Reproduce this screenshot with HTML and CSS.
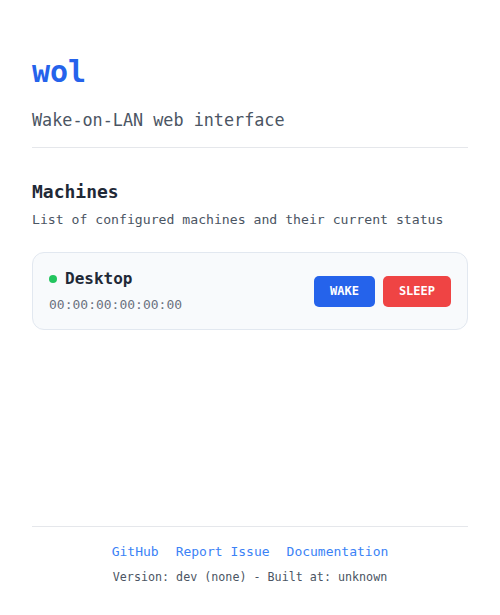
FILE: index.html
```html
<!DOCTYPE html>
<html lang="en">
<head>
<meta charset="utf-8">
<title>wol</title>
<link rel="stylesheet" href="styles.css">
</head>
<body>
<div class="page">
  <main class="main">
    <header class="header">
      <h1 class="title">wol</h1>
      <p class="subtitle">Wake-on-LAN web interface</p>
    </header>
    <section class="machines">
      <h2 class="section-title">Machines</h2>
      <p class="section-desc">List of configured machines and their current status</p>
      <div class="card">
        <div class="card-info">
          <div class="card-name"><span class="dot"></span>Desktop</div>
          <div class="card-mac">00:00:00:00:00:00</div>
        </div>
        <div class="card-actions">
          <button class="btn btn-wake">WAKE</button>
          <button class="btn btn-sleep">SLEEP</button>
        </div>
      </div>
    </section>
  </main>
  <footer class="footer">
    <nav class="links">
      <a href="#">GitHub</a>
      <a href="#">Report Issue</a>
      <a href="#">Documentation</a>
    </nav>
    <p class="version">Version: dev (none) - Built at: unknown</p>
  </footer>
</div>
</body>
</html>
```
FILE: styles.css
```css
* { box-sizing: border-box; }
html, body { margin: 0; padding: 0; }
body {
  font-family: "DejaVu Sans Mono", monospace;
  background: #ffffff;
  color: #1f2937;
}
.page {
  min-height: 100vh;
  display: flex;
  flex-direction: column;
  padding: 32px 32px 29px;
}
.main { flex: 1; }
.header {
  border-bottom: 1px solid #e5e7eb;
  padding-bottom: 15px;
  margin-bottom: 31px;
}
.title {
  margin: 0;
  padding-top: 20px;
  font-size: 30px;
  line-height: 40px;
  font-weight: bold;
  color: #2563eb;
}
.subtitle {
  margin: 16px 0 0;
  font-size: 16.8px;
  line-height: 24px;
  color: #4b5563;
}
.section-title {
  margin: 0;
  font-size: 18px;
  line-height: 26px;
  font-weight: bold;
  color: #1f2937;
}
.section-desc {
  margin: 6px 0 0;
  font-size: 13.15px;
  line-height: 18px;
  color: #4b5563;
}
.card {
  margin-top: 23px;
  display: flex;
  align-items: center;
  justify-content: space-between;
  border: 1px solid #e2e8f0;
  border-radius: 12px;
  background: #f8fafc;
  padding: 15px 16px;
}
.card-name {
  display: flex;
  align-items: center;
  gap: 8px;
  font-size: 16px;
  line-height: 22px;
  font-weight: bold;
  color: #1f2937;
}
.dot {
  width: 8px;
  height: 8px;
  border-radius: 50%;
  background: #22c55e;
}
.card-mac {
  margin-top: 6px;
  font-size: 13px;
  line-height: 18px;
  color: #6b7280;
}
.card-actions { display: flex; gap: 8px; }
.btn {
  font-family: "DejaVu Sans Mono", monospace;
  font-size: 12px;
  font-weight: bold;
  line-height: 15px;
  padding: 8px 16px;
  border: none;
  border-radius: 5px;
  color: #ffffff;
}
.btn-wake { background: #2563eb; }
.btn-sleep { background: #ef4444; }
.footer {
  border-top: 1px solid #e5e7eb;
  padding-top: 16px;
  text-align: center;
}
.links {
  display: flex;
  justify-content: center;
  gap: 17px;
  font-size: 13px;
  line-height: 18px;
}
.links a { color: #3b82f6; text-decoration: none; }
.version {
  margin: 7px 0 0;
  font-size: 11.7px;
  line-height: 18px;
  color: #4b5563;
}
```
